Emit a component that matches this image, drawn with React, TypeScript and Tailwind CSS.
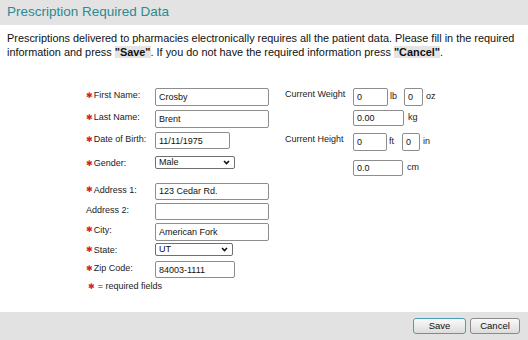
import React from 'react';

const font = { fontFamily: '"Liberation Sans", Arial, sans-serif' };

function Star() {
  return <span className="text-[#d2232a] text-[8px] leading-none mr-[1px]" style={{ fontFamily: '"DejaVu Sans", sans-serif' }}>✱</span>;
}

function Field({ label, req, children, className = '' }: { label: string; req?: boolean; children: React.ReactNode; className?: string }) {
  return (
    <div className={`flex items-start ${className}`}>
      <div className="w-[69px] flex items-center pt-[1px] text-[9px] text-[#222]">
        {req && <Star />}
        <span>{label}</span>
      </div>
      {children}
    </div>
  );
}

function TextBox({ value, w, h = 'h-[18px]' }: { value: string; w: string; h?: string }) {
  return (
    <input
      readOnly
      value={value}
      className={`block ${w} ${h} border border-[#8d8d8d] rounded-[2px] bg-white px-[3px] text-[9px] text-[#111] outline-none`}
    />
  );
}

function Select({ value, w }: { value: string; w: string }) {
  return (
    <div className={`relative ${w} h-[13px]`}>
      <select className="block appearance-none w-full h-[13px] py-0 border border-[#6f6f6f] rounded-[2px] bg-white pl-[3px] text-[9px] text-[#111] leading-[11px] outline-none">
        <option>{value}</option>
      </select>
      <svg className="absolute right-[5px] top-[4px] pointer-events-none" width="7" height="5" viewBox="0 0 7 5">
        <path d="M1 1 L3.5 3.5 L6 1" fill="none" stroke="#111" strokeWidth="1.6" />
      </svg>
    </div>
  );
}

export default function App() {
  return (
    <div className="w-[528px] h-[340px] flex flex-col bg-white overflow-hidden" style={font}>
      <div className="h-[25px] bg-[#e3e3e3] flex items-center px-[7px]">
        <h1 className="text-[13.5px] text-[#2b8a92]">Prescription Required Data</h1>
      </div>

      <div className="flex-1 flex flex-col">
        <p className="px-[7px] pt-[7px] text-[10.9px] leading-[13.5px] text-[#111]">
          Prescriptions delivered to pharmacies electronically requires all the patient data. Please fill in the required
          information and press <span className="bg-[#e4e4e4] font-bold">"Save"</span>. If you do not have the required information press{' '}
          <span className="bg-[#e4e4e4] font-bold">"Cancel"</span>.
        </p>

        <div className="flex mt-[29px] pl-[86px] gap-[16px]">
          <div className="w-[183px] flex flex-col">
            <Field label="First Name:" req><TextBox value="Crosby" w="w-[114px]" /></Field>
            <Field label="Last Name:" req className="mt-[4px]"><TextBox value="Brent" w="w-[114px]" /></Field>
            <Field label="Date of Birth:" req className="mt-[4px]"><TextBox value="11/11/1975" w="w-[75px]" h="h-[17px]" /></Field>
            <Field label="Gender:" req className="mt-[7px]"><Select value="Male" w="w-[80px]" /></Field>
            <Field label="Address 1:" req className="mt-[12px]"><TextBox value="123 Cedar Rd." w="w-[114px]" h="h-[17px]" /></Field>
            <Field label="Address 2:" className="mt-[3px]"><TextBox value="" w="w-[114px]" h="h-[17px]" /></Field>
            <Field label="City:" req className="mt-[3px]"><TextBox value="American Fork" w="w-[114px]" /></Field>
            <Field label="State:" req className="mt-[2px]"><Select value="UT" w="w-[78px]" /></Field>
            <Field label="Zip Code:" req className="mt-[4px]"><TextBox value="84003-1111" w="w-[80px]" h="h-[17px]" /></Field>
            <div className="mt-[2px] pl-[2px] flex items-center text-[9px] text-[#222]">
              <Star />
              <span className="ml-[2px]">= required fields</span>
            </div>
          </div>

          <div className="flex flex-col text-[9px] text-[#222]">
            <div className="flex items-start">
              <span className="w-[68px]">Current Weight</span>
              <div className="flex items-center gap-[2px]">
                <TextBox value="0" w="w-[35px]" />
                <span className="w-[12px]">lb</span>
                <TextBox value="0" w="w-[19px]" />
                <span className="ml-[1px]">oz</span>
              </div>
            </div>
            <div className="flex items-center mt-[4px] pl-[68px] gap-[4px]">
              <TextBox value="0.00" w="w-[51px]" h="h-[16px]" />
              <span>kg</span>
            </div>
            <div className="flex items-start mt-[7px]">
              <span className="w-[68px]">Current Height</span>
              <div className="flex items-center gap-[2px]">
                <TextBox value="0" w="w-[34px]" />
                <span className="w-[11px]">ft</span>
                <TextBox value="0" w="w-[18px]" />
                <span className="ml-[1px]">in</span>
              </div>
            </div>
            <div className="flex items-center mt-[9px] pl-[68px] gap-[4px]">
              <TextBox value="0.0" w="w-[50px]" h="h-[16px]" />
              <span>cm</span>
            </div>
          </div>
        </div>
      </div>

      <div className="h-[28px] bg-[#e2e2e2] flex items-center justify-end gap-[4px] pr-[8px]">
        <button className="w-[53px] h-[16px] rounded-[3px] border border-[#4b9fb3] bg-gradient-to-b from-[#fafafa] to-[#dcdcdc] text-[9.5px] text-[#111]">Save</button>
        <button className="w-[50px] h-[16px] rounded-[3px] border border-[#8a8a8a] bg-gradient-to-b from-[#fafafa] to-[#dcdcdc] text-[9.5px] text-[#111]">Cancel</button>
      </div>
    </div>
  );
}
